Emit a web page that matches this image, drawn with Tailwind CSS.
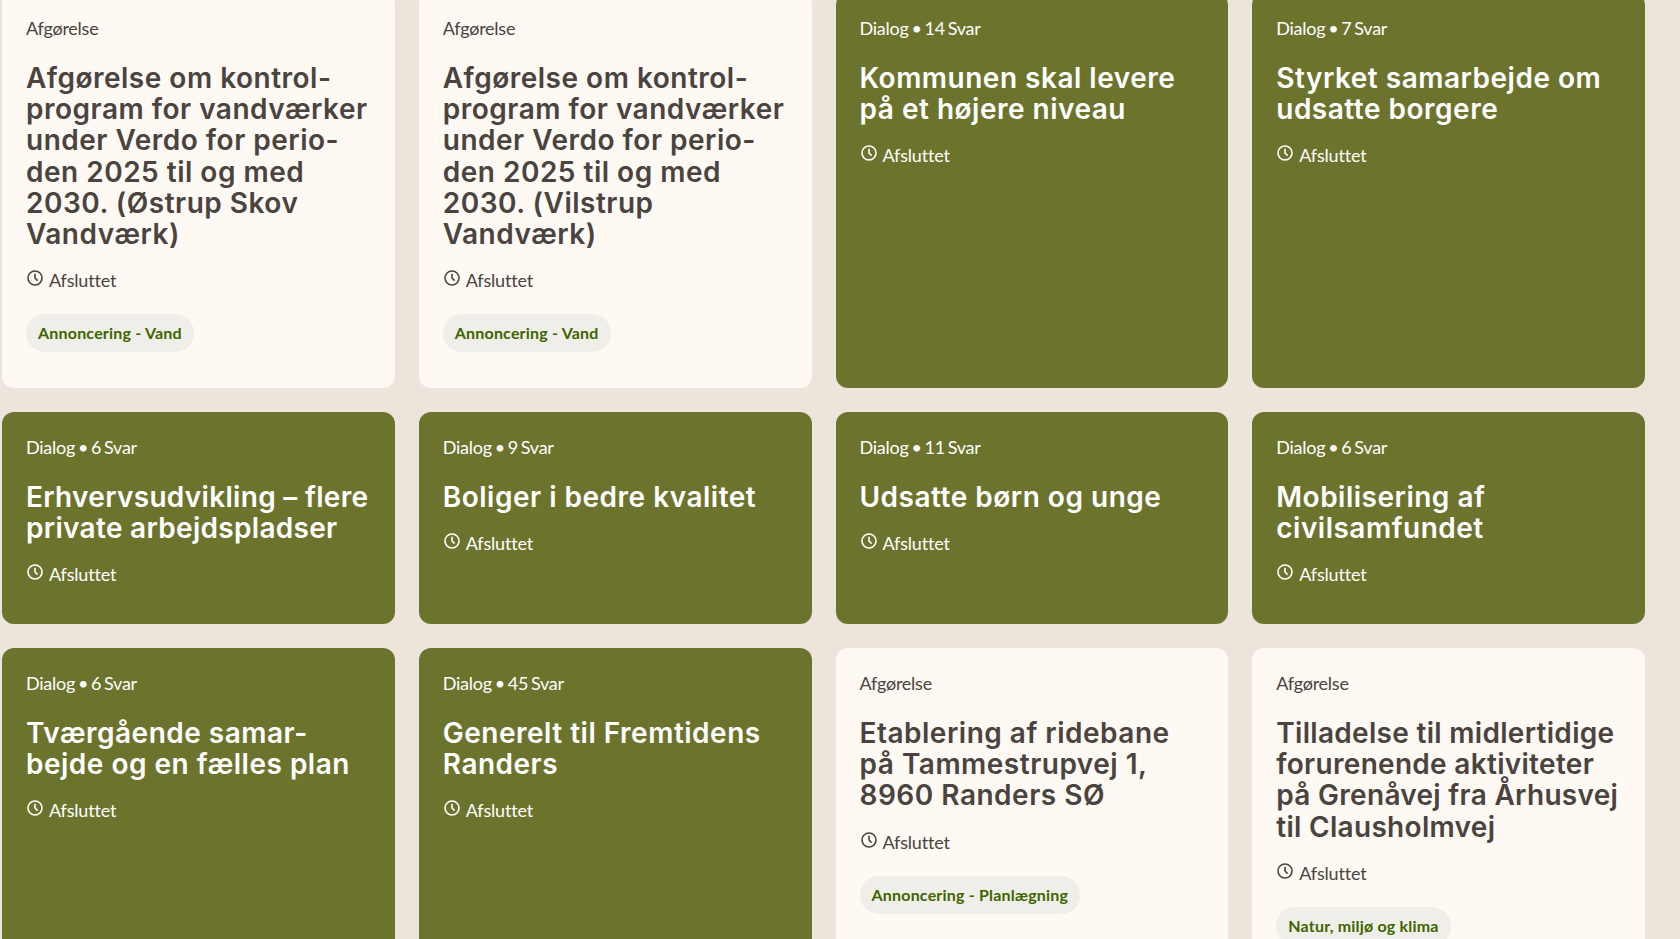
<!DOCTYPE html>
<html lang="da">
<head>
  <meta charset="utf-8" />
  <title>Projekter</title>
  <script src="https://cdn.jsdelivr.net/npm/@tailwindcss/browser@4"></script>
</head>
<body class="h-screen overflow-hidden bg-[#ede5dc] font-['Lato',sans-serif]">
  <main class="w-[1643px] ml-[2px] -mt-[7px] grid grid-cols-4 gap-6">

    <!-- row 1 -->
    <article class="h-[395px] rounded-xl bg-[#fef9f3] text-[#4a4340] px-6 pb-6 pt-[23px]">
      <p class="text-[18px] leading-[24px] tracking-[-0.25px]">Afgørelse</p>
      <h2 class="mt-[23px] whitespace-nowrap font-['Inter',sans-serif] font-semibold text-[28px] leading-[31.2px] tracking-[0.5px]">Afgørelse om kontrol-<br>program for vandværker<br>under Verdo for perio-<br>den 2025 til og med<br>2030. (Østrup Skov<br>Vandværk)</h2>
      <p class="mt-[18px] flex items-center gap-[5px] text-[18px] leading-[24px] tracking-[-0.2px]">
        <svg class="w-4 h-4 -mt-[4px] ml-[1px] mr-[1px]" viewBox="0 0 16 16" fill="none" stroke="currentColor" stroke-width="1.6"><circle cx="8" cy="8" r="7"/><path d="M8 3.8V8l2.6 2.6"/></svg>
        Afsluttet
      </p>
      <span class="mt-[22px] inline-block rounded-full bg-[#f0eee8] text-[#3d6600] font-bold text-[16px] leading-[38px] tracking-[0.2px] px-3">Annoncering - Vand</span>
    </article>

    <article class="h-[395px] rounded-xl bg-[#fef9f3] text-[#4a4340] px-6 pb-6 pt-[23px]">
      <p class="text-[18px] leading-[24px] tracking-[-0.25px]">Afgørelse</p>
      <h2 class="mt-[23px] whitespace-nowrap font-['Inter',sans-serif] font-semibold text-[28px] leading-[31.2px] tracking-[0.5px]">Afgørelse om kontrol-<br>program for vandværker<br>under Verdo for perio-<br>den 2025 til og med<br>2030. (Vilstrup<br>Vandværk)</h2>
      <p class="mt-[18px] flex items-center gap-[5px] text-[18px] leading-[24px] tracking-[-0.2px]">
        <svg class="w-4 h-4 -mt-[4px] ml-[1px] mr-[1px]" viewBox="0 0 16 16" fill="none" stroke="currentColor" stroke-width="1.6"><circle cx="8" cy="8" r="7"/><path d="M8 3.8V8l2.6 2.6"/></svg>
        Afsluttet
      </p>
      <span class="mt-[22px] inline-block rounded-full bg-[#f0eee8] text-[#3d6600] font-bold text-[16px] leading-[38px] tracking-[0.2px] px-3">Annoncering - Vand</span>
    </article>

    <article class="h-[395px] rounded-xl bg-[#6c732d] text-white px-6 pb-6 pt-[23px]">
      <p class="text-[18px] leading-[24px] tracking-[-0.25px] [word-spacing:-1.5px]">Dialog • 14 Svar</p>
      <h2 class="mt-[23px] whitespace-nowrap font-['Inter',sans-serif] font-semibold text-[28px] leading-[31.2px] tracking-[0.5px]">Kommunen skal levere<br>på et højere niveau</h2>
      <p class="mt-[18px] flex items-center gap-[5px] text-[18px] leading-[24px] tracking-[-0.2px]">
        <svg class="w-4 h-4 -mt-[4px] ml-[1px] mr-[1px]" viewBox="0 0 16 16" fill="none" stroke="currentColor" stroke-width="1.6"><circle cx="8" cy="8" r="7"/><path d="M8 3.8V8l2.6 2.6"/></svg>
        Afsluttet
      </p>
    </article>

    <article class="h-[395px] rounded-xl bg-[#6c732d] text-white px-6 pb-6 pt-[23px]">
      <p class="text-[18px] leading-[24px] tracking-[-0.25px] [word-spacing:-1.5px]">Dialog • 7 Svar</p>
      <h2 class="mt-[23px] whitespace-nowrap font-['Inter',sans-serif] font-semibold text-[28px] leading-[31.2px] tracking-[0.5px]">Styrket samarbejde om<br>udsatte borgere</h2>
      <p class="mt-[18px] flex items-center gap-[5px] text-[18px] leading-[24px] tracking-[-0.2px]">
        <svg class="w-4 h-4 -mt-[4px] ml-[1px] mr-[1px]" viewBox="0 0 16 16" fill="none" stroke="currentColor" stroke-width="1.6"><circle cx="8" cy="8" r="7"/><path d="M8 3.8V8l2.6 2.6"/></svg>
        Afsluttet
      </p>
    </article>

    <!-- row 2 -->
    <article class="h-[212px] rounded-xl bg-[#6c732d] text-white px-6 pb-6 pt-[23px]">
      <p class="text-[18px] leading-[24px] tracking-[-0.25px] [word-spacing:-1.5px]">Dialog • 6 Svar</p>
      <h2 class="mt-[23px] whitespace-nowrap font-['Inter',sans-serif] font-semibold text-[28px] leading-[31.2px] tracking-[0.3px]">Erhvervsudvikling – flere<br>private arbejdspladser</h2>
      <p class="mt-[18px] flex items-center gap-[5px] text-[18px] leading-[24px] tracking-[-0.2px]">
        <svg class="w-4 h-4 -mt-[4px] ml-[1px] mr-[1px]" viewBox="0 0 16 16" fill="none" stroke="currentColor" stroke-width="1.6"><circle cx="8" cy="8" r="7"/><path d="M8 3.8V8l2.6 2.6"/></svg>
        Afsluttet
      </p>
    </article>

    <article class="h-[212px] rounded-xl bg-[#6c732d] text-white px-6 pb-6 pt-[23px]">
      <p class="text-[18px] leading-[24px] tracking-[-0.25px] [word-spacing:-1.5px]">Dialog • 9 Svar</p>
      <h2 class="mt-[23px] whitespace-nowrap font-['Inter',sans-serif] font-semibold text-[28px] leading-[31.2px] tracking-[0.5px]">Boliger i bedre kvalitet</h2>
      <p class="mt-[18px] flex items-center gap-[5px] text-[18px] leading-[24px] tracking-[-0.2px]">
        <svg class="w-4 h-4 -mt-[4px] ml-[1px] mr-[1px]" viewBox="0 0 16 16" fill="none" stroke="currentColor" stroke-width="1.6"><circle cx="8" cy="8" r="7"/><path d="M8 3.8V8l2.6 2.6"/></svg>
        Afsluttet
      </p>
    </article>

    <article class="h-[212px] rounded-xl bg-[#6c732d] text-white px-6 pb-6 pt-[23px]">
      <p class="text-[18px] leading-[24px] tracking-[-0.25px] [word-spacing:-1.5px]">Dialog • 11 Svar</p>
      <h2 class="mt-[23px] whitespace-nowrap font-['Inter',sans-serif] font-semibold text-[28px] leading-[31.2px] tracking-[0.5px]">Udsatte børn og unge</h2>
      <p class="mt-[18px] flex items-center gap-[5px] text-[18px] leading-[24px] tracking-[-0.2px]">
        <svg class="w-4 h-4 -mt-[4px] ml-[1px] mr-[1px]" viewBox="0 0 16 16" fill="none" stroke="currentColor" stroke-width="1.6"><circle cx="8" cy="8" r="7"/><path d="M8 3.8V8l2.6 2.6"/></svg>
        Afsluttet
      </p>
    </article>

    <article class="h-[212px] rounded-xl bg-[#6c732d] text-white px-6 pb-6 pt-[23px]">
      <p class="text-[18px] leading-[24px] tracking-[-0.25px] [word-spacing:-1.5px]">Dialog • 6 Svar</p>
      <h2 class="mt-[23px] whitespace-nowrap font-['Inter',sans-serif] font-semibold text-[28px] leading-[31.2px] tracking-[0.5px]">Mobilisering af<br>civilsamfundet</h2>
      <p class="mt-[18px] flex items-center gap-[5px] text-[18px] leading-[24px] tracking-[-0.2px]">
        <svg class="w-4 h-4 -mt-[4px] ml-[1px] mr-[1px]" viewBox="0 0 16 16" fill="none" stroke="currentColor" stroke-width="1.6"><circle cx="8" cy="8" r="7"/><path d="M8 3.8V8l2.6 2.6"/></svg>
        Afsluttet
      </p>
    </article>

    <!-- row 3 -->
    <article class="h-[395px] rounded-xl bg-[#6c732d] text-white px-6 pb-6 pt-[23px]">
      <p class="text-[18px] leading-[24px] tracking-[-0.25px] [word-spacing:-1.5px]">Dialog • 6 Svar</p>
      <h2 class="mt-[23px] whitespace-nowrap font-['Inter',sans-serif] font-semibold text-[28px] leading-[31.2px] tracking-[0.5px]">Tværgående samar-<br>bejde og en fælles plan</h2>
      <p class="mt-[18px] flex items-center gap-[5px] text-[18px] leading-[24px] tracking-[-0.2px]">
        <svg class="w-4 h-4 -mt-[4px] ml-[1px] mr-[1px]" viewBox="0 0 16 16" fill="none" stroke="currentColor" stroke-width="1.6"><circle cx="8" cy="8" r="7"/><path d="M8 3.8V8l2.6 2.6"/></svg>
        Afsluttet
      </p>
    </article>

    <article class="h-[395px] rounded-xl bg-[#6c732d] text-white px-6 pb-6 pt-[23px]">
      <p class="text-[18px] leading-[24px] tracking-[-0.25px] [word-spacing:-1.5px]">Dialog • 45 Svar</p>
      <h2 class="mt-[23px] whitespace-nowrap font-['Inter',sans-serif] font-semibold text-[28px] leading-[31.2px] tracking-[0.5px]">Generelt til Fremtidens<br>Randers</h2>
      <p class="mt-[18px] flex items-center gap-[5px] text-[18px] leading-[24px] tracking-[-0.2px]">
        <svg class="w-4 h-4 -mt-[4px] ml-[1px] mr-[1px]" viewBox="0 0 16 16" fill="none" stroke="currentColor" stroke-width="1.6"><circle cx="8" cy="8" r="7"/><path d="M8 3.8V8l2.6 2.6"/></svg>
        Afsluttet
      </p>
    </article>

    <article class="h-[395px] rounded-xl bg-[#fef9f3] text-[#4a4340] px-6 pb-6 pt-[23px]">
      <p class="text-[18px] leading-[24px] tracking-[-0.25px]">Afgørelse</p>
      <h2 class="mt-[23px] whitespace-nowrap font-['Inter',sans-serif] font-semibold text-[28px] leading-[31.2px] tracking-[0.5px]">Etablering af ridebane<br>på Tammestrupvej 1,<br>8960 Randers SØ</h2>
      <p class="mt-[18px] flex items-center gap-[5px] text-[18px] leading-[24px] tracking-[-0.2px]">
        <svg class="w-4 h-4 -mt-[4px] ml-[1px] mr-[1px]" viewBox="0 0 16 16" fill="none" stroke="currentColor" stroke-width="1.6"><circle cx="8" cy="8" r="7"/><path d="M8 3.8V8l2.6 2.6"/></svg>
        Afsluttet
      </p>
      <span class="mt-[22px] inline-block rounded-full bg-[#f0eee8] text-[#3d6600] font-bold text-[16px] leading-[38px] tracking-[0.2px] px-3">Annoncering - Planlægning</span>
    </article>

    <article class="h-[395px] rounded-xl bg-[#fef9f3] text-[#4a4340] px-6 pb-6 pt-[23px]">
      <p class="text-[18px] leading-[24px] tracking-[-0.25px]">Afgørelse</p>
      <h2 class="mt-[23px] whitespace-nowrap font-['Inter',sans-serif] font-semibold text-[28px] leading-[31.2px] tracking-[0.3px]">Tilladelse til midlertidige<br>forurenende aktiviteter<br>på Grenåvej fra Århusvej<br>til Clausholmvej</h2>
      <p class="mt-[18px] flex items-center gap-[5px] text-[18px] leading-[24px] tracking-[-0.2px]">
        <svg class="w-4 h-4 -mt-[4px] ml-[1px] mr-[1px]" viewBox="0 0 16 16" fill="none" stroke="currentColor" stroke-width="1.6"><circle cx="8" cy="8" r="7"/><path d="M8 3.8V8l2.6 2.6"/></svg>
        Afsluttet
      </p>
      <span class="mt-[22px] inline-block rounded-full bg-[#f0eee8] text-[#3d6600] font-bold text-[16px] leading-[38px] tracking-[0.2px] px-3">Natur, miljø og klima</span>
    </article>

  </main>
</body>
</html>
